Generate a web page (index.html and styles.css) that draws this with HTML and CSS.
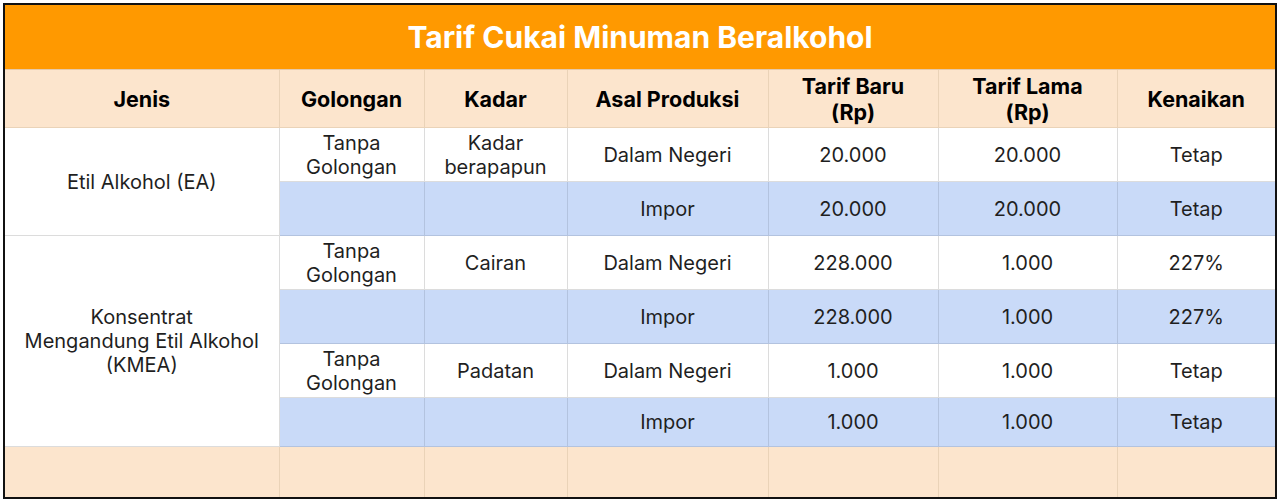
FILE: index.html
```html
<!DOCTYPE html>
<html lang="id">
<head>
<meta charset="utf-8">
<title>Tarif Cukai Minuman Beralkohol</title>
<link rel="stylesheet" href="styles.css">
</head>
<body>
<table class="tarif">
  <colgroup>
    <col class="c-jenis">
    <col class="c-gol">
    <col class="c-kadar">
    <col class="c-asal">
    <col class="c-baru">
    <col class="c-lama">
    <col class="c-naik">
  </colgroup>
  <thead>
    <tr class="r-title"><th colspan="7" class="title">Tarif Cukai Minuman Beralkohol</th></tr>
    <tr class="r-head">
      <th>Jenis</th>
      <th>Golongan</th>
      <th>Kadar</th>
      <th>Asal Produksi</th>
      <th>Tarif Baru<br>(Rp)</th>
      <th>Tarif Lama<br>(Rp)</th>
      <th>Kenaikan</th>
    </tr>
  </thead>
  <tbody>
    <tr class="r-a">
      <td rowspan="2" class="jenis">Etil Alkohol (EA)</td>
      <td>Tanpa<br>Golongan</td>
      <td>Kadar<br>berapapun</td>
      <td>Dalam Negeri</td>
      <td>20.000</td>
      <td>20.000</td>
      <td>Tetap</td>
    </tr>
    <tr class="r-b blue">
      <td></td><td></td>
      <td>Impor</td>
      <td>20.000</td>
      <td>20.000</td>
      <td>Tetap</td>
    </tr>
    <tr class="r-c">
      <td rowspan="4" class="jenis">Konsentrat<br>Mengandung Etil Alkohol<br>(KMEA)</td>
      <td>Tanpa<br>Golongan</td>
      <td>Cairan</td>
      <td>Dalam Negeri</td>
      <td>228.000</td>
      <td>1.000</td>
      <td>227%</td>
    </tr>
    <tr class="r-d blue">
      <td></td><td></td>
      <td>Impor</td>
      <td>228.000</td>
      <td>1.000</td>
      <td>227%</td>
    </tr>
    <tr class="r-e">
      <td>Tanpa<br>Golongan</td>
      <td>Padatan</td>
      <td>Dalam Negeri</td>
      <td>1.000</td>
      <td>1.000</td>
      <td>Tetap</td>
    </tr>
    <tr class="r-f blue">
      <td></td><td></td>
      <td>Impor</td>
      <td>1.000</td>
      <td>1.000</td>
      <td>Tetap</td>
    </tr>
    <tr class="r-foot">
      <td></td><td></td><td></td><td></td><td></td><td></td><td></td>
    </tr>
  </tbody>
</table>
</body>
</html>
```

FILE: styles.css
```css
html, body {
  margin: 0;
  padding: 0;
  background: #ffffff;
}

body {
  padding: 3px 0 0 3px;
  font-family: Inter, "Liberation Sans", sans-serif;
}

.tarif {
  border-collapse: collapse;
  table-layout: fixed;
  width: 1272px;
  border: 2px solid #111111;
}

.c-jenis { width: 275px; }
.c-gol { width: 145px; }
.c-kadar { width: 143px; }
.c-asal { width: 201px; }
.c-baru { width: 170px; }
.c-lama { width: 179px; }
.c-naik { width: 159px; }

.tarif th,
.tarif td {
  padding: 0 2px;
  text-align: center;
  vertical-align: middle;
  border: 1px solid #dcdcdc;
}

.tarif td {
  font-size: 20px;
  line-height: 24px;
  color: #1f1f1f;
  font-weight: 400;
}

.title {
  background: #ff9900;
  color: #ffffff;
  font-size: 30px;
  font-weight: 700;
  height: 64px;
  border-color: #ff9900 !important;
  border-bottom-color: #e6c9a8 !important;
}

.r-head th {
  background: #fce5cd;
  color: #000000;
  font-size: 21.5px;
  font-weight: 700;
  line-height: 26px;
  height: 57px;
  border-color: #ead3b8;
}

.r-a td, .r-c td, .r-e td { height: 53px; }
.r-b td, .r-d td { height: 53px; }
.r-f td { height: 48px; }

.blue td {
  background: #c9daf8;
  border-color: #b3c3df;
}

.jenis {
  background: #ffffff;
  border-color: #dcdcdc !important;
}

.r-foot td {
  background: #fce5cd;
  height: 50px;
  border-color: #ead3b8;
}
```
